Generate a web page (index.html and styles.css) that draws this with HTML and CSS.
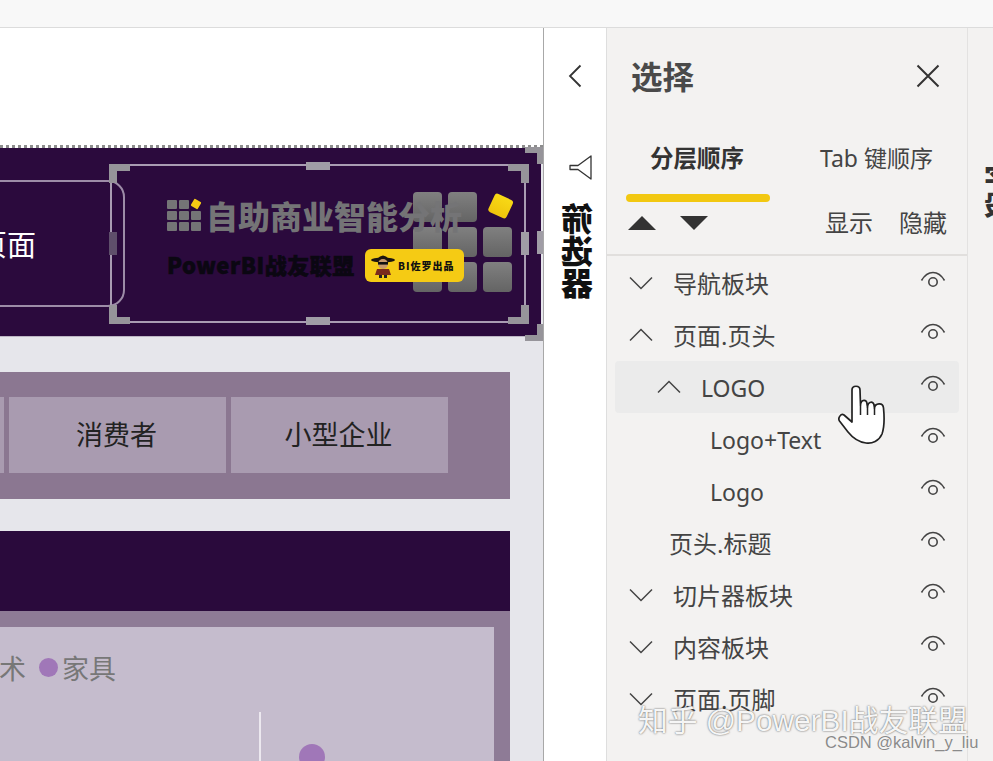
FILE: index.html
```html
<!DOCTYPE html>
<html lang="zh">
<head>
<meta charset="utf-8">
<title>选择</title>
<link rel="stylesheet" href="styles.css">
</head>
<body>
<div class="topbar"></div>
<div class="main">
  <section class="canvas">
    <div class="blank"></div>
    <div class="dots"></div>
    <div class="header-band">
      <div class="pill"><span class="pill-text">页面</span></div>
      <div class="big-grid"><i></i><i></i><b></b><i></i><i></i><i></i><i></i><i></i><i></i></div>
      <div class="logo">
        <div class="logo-title">
          <div class="mini-grid"><i></i><i></i><i></i><i></i><i></i><i></i><i></i><i></i><i></i></div>
          <span class="mini-diamond"></span>
          <span class="logo-cn">自助商业智能分析</span>
        </div>
        <div class="logo-sub">PowerBI战友联盟</div>
      </div>
      <div class="badge">
        <svg class="zorro" viewBox="0 0 26 24" width="26" height="24"><ellipse cx="13" cy="6" rx="12" ry="2.6" fill="#1b1410"/><path d="M7 5 Q13 -2 19 5Z" fill="#1b1410"/><circle cx="13" cy="10" r="5" fill="#c99a6a"/><rect x="8" y="8" width="10" height="2.6" fill="#111"/><path d="M7 15h12l2 6H5z" fill="#7a2a1c"/><path d="M9 21h3v3H9zM14 21h3v3h-3z" fill="#222"/></svg>
        <span class="badge-text">BI佐罗出品</span>
      </div>
      <div class="sel-frame inner">
        <span class="h tl"></span><span class="h tr"></span><span class="h bl"></span><span class="h br"></span>
        <span class="m top"></span><span class="m bottom"></span><span class="m left"></span><span class="m right"></span>
      </div>
      <span class="outer tr2"></span><span class="outer br2"></span><span class="outer-mid"></span>
    </div>
    <div class="tabs-band">
      <div class="slicer-btn"></div>
      <div class="slicer-btn">消费者</div>
      <div class="slicer-btn">小型企业</div>
    </div>
    <div class="chart-head"></div>
    <div class="chart-wrap">
      <div class="chart">
        <div class="legend"><span>术</span><i class="legend-dot"></i><span>家具</span></div>
        <div class="axis-line"></div>
        <div class="point"></div>
      </div>
    </div>
  </section>

  <aside class="filters">
    <svg class="back" viewBox="0 0 14 24" width="14" height="24"><path d="M12.5 1.5 2 12l10.500 10.500" fill="none" stroke="#333" stroke-width="1.800"/></svg>
    <svg class="funnel" viewBox="0 0 23 25" width="23" height="25"><path d="M22 1 V24 L9 14.500 H1 V10.500 H9 Z" fill="none" stroke="#333" stroke-width="1.300" stroke-linejoin="round"/></svg>
    <div class="filters-label">筛选器</div>
  </aside>

  <aside class="panel">
    <header class="panel-head">
      <h1>选择</h1>
      <svg viewBox="0 0 24 24" width="24" height="24"><path d="M1.500 1.500l21 21M22.500 1.500l-21 21" stroke="#333" stroke-width="2" fill="none"/></svg>
    </header>
    <nav class="tabs">
      <span class="tab active">分层顺序</span>
      <span class="tab">Tab 键顺序</span>
      <span class="tab-line"></span>
    </nav>
    <div class="toolbar">
      <span class="tri up"></span>
      <span class="tri down"></span>
      <span class="tool first">显示</span>
      <span class="tool">隐藏</span>
    </div>
    <ul class="layers">
      <li class="row l0"><svg class="chev" viewBox="0 0 24 14" width="24" height="14"><path d="M1 1.500 12 12.500 23 1.500"/></svg><span>导航板块</span><svg class="eye" viewBox="0 0 26 18" width="26" height="18"><path d="M1.500 9.500C5 3.500 9 1.500 13 1.500s8 2 11.500 8"/><circle cx="13" cy="11" r="4.200"/></svg></li>
      <li class="row l0"><svg class="chev" viewBox="0 0 24 14" width="24" height="14"><path d="M1 12.500 12 1.500 23 12.500"/></svg><span>页面.页头</span><svg class="eye" viewBox="0 0 26 18" width="26" height="18"><path d="M1.500 9.500C5 3.500 9 1.500 13 1.500s8 2 11.500 8"/><circle cx="13" cy="11" r="4.200"/></svg></li>
      <li class="row l1 hover"><svg class="chev" viewBox="0 0 24 14" width="24" height="14"><path d="M1 12.500 12 1.500 23 12.500"/></svg><span class="latin">LOGO</span><svg class="eye" viewBox="0 0 26 18" width="26" height="18"><path d="M1.500 9.500C5 3.500 9 1.500 13 1.500s8 2 11.500 8"/><circle cx="13" cy="11" r="4.200"/></svg></li>
      <li class="row l2"><span class="latin">Logo+Text</span><svg class="eye" viewBox="0 0 26 18" width="26" height="18"><path d="M1.500 9.500C5 3.500 9 1.500 13 1.500s8 2 11.500 8"/><circle cx="13" cy="11" r="4.200"/></svg></li>
      <li class="row l2"><span class="latin">Logo</span><svg class="eye" viewBox="0 0 26 18" width="26" height="18"><path d="M1.500 9.500C5 3.500 9 1.500 13 1.500s8 2 11.500 8"/><circle cx="13" cy="11" r="4.200"/></svg></li>
      <li class="row lp"><span>页头.标题</span><svg class="eye" viewBox="0 0 26 18" width="26" height="18"><path d="M1.500 9.500C5 3.500 9 1.500 13 1.500s8 2 11.500 8"/><circle cx="13" cy="11" r="4.200"/></svg></li>
      <li class="row l0"><svg class="chev" viewBox="0 0 24 14" width="24" height="14"><path d="M1 1.500 12 12.500 23 1.500"/></svg><span>切片器板块</span><svg class="eye" viewBox="0 0 26 18" width="26" height="18"><path d="M1.500 9.500C5 3.500 9 1.500 13 1.500s8 2 11.500 8"/><circle cx="13" cy="11" r="4.200"/></svg></li>
      <li class="row l0"><svg class="chev" viewBox="0 0 24 14" width="24" height="14"><path d="M1 1.500 12 12.500 23 1.500"/></svg><span>内容板块</span><svg class="eye" viewBox="0 0 26 18" width="26" height="18"><path d="M1.500 9.500C5 3.500 9 1.500 13 1.500s8 2 11.500 8"/><circle cx="13" cy="11" r="4.200"/></svg></li>
      <li class="row l0"><svg class="chev" viewBox="0 0 24 14" width="24" height="14"><path d="M1 1.500 12 12.500 23 1.500"/></svg><span>页面.页脚</span><svg class="eye" viewBox="0 0 26 18" width="26" height="18"><path d="M1.500 9.500C5 3.500 9 1.500 13 1.500s8 2 11.500 8"/><circle cx="13" cy="11" r="4.200"/></svg></li>
    </ul>
    <svg class="cursor" viewBox="0 0 48 60" width="48" height="60"><path d="M14 5C14 0 22 0 22 5L22.500 20C23 14 29 14 29 19L29.500 22C30 16 35.500 16 36 20L36.500 23C37 18 45 17 45.500 23C46.500 33 46.500 42 44 49C41 56 34 59 28 58C20 57 14 52 10 47L1.500 36C-.5 33 3 28 6 30L14 37Z" fill="#fff" stroke="#222" stroke-width="1.700" stroke-linejoin="round"/><path d="M22.500 20V30M29.500 22V30M36.500 23V30" stroke="#222" stroke-width="1.500" fill="none"/></svg>
  </aside>

  <aside class="right-strip"><span>字段</span></aside>
</div>
<div class="wm-zhihu">知乎 @PowerBI战友联盟</div>
<div class="wm-csdn">CSDN @kalvin_y_liu</div>
</body>
</html>
```

FILE: styles.css
```css
* { box-sizing: border-box; }
html, body { margin: 0; padding: 0; height: 761px; overflow: hidden; background: #fff; }
body { position: relative; font-family: "Noto Sans", "Noto Sans CJK SC", sans-serif; color: #444; }
ul { list-style: none; margin: 0; padding: 0; }
h1 { margin: 0; }

.topbar { height: 28px; background: #f8f8f8; border-bottom: 1px solid #dcdcdc; }
.main { display: flex; height: 733px; }

/* report canvas */
.canvas { position: relative; width: 544px; flex: none; background: #e6e6eb; border-right: 1px solid #a8a8a8; overflow: hidden; }
.blank { height: 116px; background: #fff; }
.dots { height: 4px; background: #fff; border-bottom: 3px dotted #8d8d8d; }
.header-band { position: relative; height: 189px; width: 541px; background: #2b0a3d; border-bottom: 1px solid #bdb6c4; }

.pill { position: absolute; left: -40px; top: 32px; width: 165px; height: 127px; border: 2px solid #9d8ca8; border-radius: 0 17px 17px 0; display: flex; justify-content: flex-end; align-items: center; padding-right: 87px; }
.pill-text { color: #fff; font-size: 29px; line-height: 1; white-space: nowrap; font-family: "Noto Sans CJK SC", sans-serif; }

.logo { position: absolute; left: 167px; top: 50px; }
.logo-title { display: flex; align-items: center; height: 33px; position: relative; }
.mini-grid { display: grid; grid-template-columns: repeat(3, 10px); grid-template-rows: repeat(3, 9px); gap: 2px; margin-right: 5px; margin-top: 1px; width: 34px; }
.mini-grid i { background: #747476; border-radius: 1px; }
.mini-grid i:nth-child(3) { background: transparent; }
.mini-diamond { position: absolute; left: 25px; top: 2px; width: 8px; height: 8px; background: #f5cb14; transform: rotate(30deg); border-radius: 1px; }
.logo-cn { font-size: 32px; line-height: 1; font-weight: 900; color: #747476; white-space: nowrap; font-family: "Noto Sans CJK SC", sans-serif; }
.logo-sub { margin-top: 21px; font-size: 22px; line-height: 24px; font-weight: 900; color: #0b0712; white-space: nowrap; font-family: "Noto Sans CJK SC", sans-serif; letter-spacing: .5px; -webkit-text-stroke: .6px #0b0712; }

.big-grid { position: absolute; left: 413px; top: 44px; display: grid; grid-template-columns: repeat(3, 29px); grid-template-rows: repeat(3, 30px); gap: 5px 6px; }
.big-grid i { background: linear-gradient(#808080, #646464); border-radius: 4px; }
.big-grid b { align-self: center; justify-self: center; width: 20px; height: 20px; background: linear-gradient(#f8d916, #efc40c); border-radius: 3px; transform: rotate(25deg) translate(2px, -2px); }

.badge { position: absolute; left: 365px; top: 101px; width: 99px; height: 33px; background: #f5cb14; border-radius: 6px; display: flex; align-items: center; padding-left: 5px; gap: 2px; }
.badge-text { font-size: 10px; font-weight: 900; color: #111; white-space: nowrap; letter-spacing: 1px; font-family: "Noto Sans CJK SC", sans-serif; }

.sel-frame { position: absolute; left: 110px; top: 16px; width: 416px; height: 159px; border: 2px solid #a99cb3; }
.h { position: absolute; width: 21px; height: 19px; border: 0 solid #96949a; }
.tl { left: -3px; top: -2px; border-width: 7px 0 0 8px; }
.tr { right: -5px; top: -2px; border-width: 7px 8px 0 0; }
.bl { left: -3px; bottom: -3px; border-width: 0 0 7px 8px; }
.br { right: -5px; bottom: -3px; border-width: 0 8px 7px 0; }
.m { position: absolute; background: #a09da6; }
.top { left: 194px; top: -4px; width: 24px; height: 8px; }
.bottom { left: 194px; bottom: -4px; width: 24px; height: 8px; }
.left { left: -3px; top: 66px; width: 8px; height: 23px; background: #5f4f6b; }
.right { right: -5px; top: 66px; width: 8px; height: 23px; }
.outer { position: absolute; width: 18px; height: 17px; border: 0 solid #96949a; right: -2px; }
.tr2 { top: -1px; border-width: 6px 6px 0 0; }
.br2 { bottom: -5px; border-width: 0 6px 6px 0; }
.outer-mid { position: absolute; right: -2px; top: 83px; width: 6px; height: 23px; background: #a09da6; }

.tabs-band { margin-top: 35px; width: 510px; height: 127px; background: #8b7791; display: flex; justify-content: flex-end; align-items: center; gap: 5px; padding: 0 62px 1px 0; }
.slicer-btn { width: 217px; height: 76px; flex: none; background: #a99bb0; display: flex; align-items: center; justify-content: center; padding: 0 2px 3px 0; color: #222; font-size: 27px; font-family: "Noto Sans CJK SC", sans-serif; }

.chart-head { margin-top: 32px; width: 510px; height: 80px; background: #2a0a3c; }
.chart-wrap { width: 510px; height: 200px; background: #8e7b96; padding: 16px 16px 0 0; }
.chart { position: relative; height: 200px; background: #c5bccd; }
.legend { display: flex; align-items: center; height: 42px; padding-top: 19px; box-sizing: content-box; margin-left: 1px; font-size: 27px; line-height: 1; color: #777; font-family: "Noto Sans CJK SC", sans-serif; }
.legend span:first-child { margin-left: -2px; }
.legend-dot { width: 19px; height: 19px; border-radius: 50%; background: #a077b8; margin: 0 4px 0 13px; }
.axis-line { position: absolute; left: 259px; top: 85px; width: 2px; height: 60px; background: #ece8ef; }
.point { position: absolute; left: 299px; top: 117px; width: 26px; height: 26px; border-radius: 50%; background: #a077b8; }

/* collapsed filter pane: the source video mirrors these labels */
.filters { width: 62px; flex: none; background: #fff; display: flex; flex-direction: column; align-items: flex-start; position: relative; }
.back { margin: 36px 0 0 24px; }
.funnel { margin: 67px 0 0 25px; }
.filters-label { margin: 23px 0 0 17px; writing-mode: vertical-rl; text-orientation: upright; font-size: 32px; line-height: 32px; font-weight: 900; color: #111; transform: scaleX(-1); font-family: "Noto Sans CJK SC", sans-serif; }

/* selection pane */
.panel { position: relative; width: 362px; flex: none; background: #f3f2f1; border-left: 1px solid #dedede; border-right: 1px solid #e3e2e1; display: flex; flex-direction: column; }
.panel-head { height: 100px; display: flex; justify-content: space-between; align-items: center; padding: 0 27px 0 24px; }
.panel-head h1 { font-size: 31.500px; line-height: 1; font-weight: 700; color: #4a4a4a; margin-top: -4px; font-family: "Noto Sans CJK SC", sans-serif; }
.panel-head svg { margin-top: -4px; }
.tabs { position: relative; height: 74px; display: flex; align-items: flex-start; padding: 16px 0 0 43px; font-size: 23.500px; line-height: 28px; }
.tab { white-space: nowrap; color: #444; }
.tab:nth-child(2) { margin-left: 76px; font-size: 23px; }
.tab.active { font-weight: 700; color: #333; }
.tab-line { position: absolute; left: 19px; bottom: 0; width: 144px; height: 8px; background: #f2c811; border-radius: 4px; }
.toolbar { height: 54px; display: flex; align-items: center; padding: 0 20px 10px 21px; border-bottom: 2px solid #e1dfdd; }
.tri { width: 0; height: 0; border-left: 14px solid transparent; border-right: 14px solid transparent; }
.up { border-bottom: 14px solid #333; }
.down { margin-left: 24px; border-top: 14px solid #333; }
.tool { font-size: 24px; line-height: 28px; color: #444; margin-left: 26px; }
.tool.first { margin-left: auto; }

.layers { padding-top: 1px; }
.row { display: flex; align-items: center; height: 52px; margin: 0 8px; padding-right: 13px; font-size: 24px; color: #444; white-space: nowrap; border-radius: 4px; }
.row span { flex: 1; margin-top: -2px; }
.row .latin { font-size: 23px; margin-top: 1px; }
.l0 { padding-left: 14px; }
.l1 { padding-left: 42px; }
.l2 { padding-left: 95px; }
.lp { padding-left: 54px; }
.hover { background: #ebebeb; }
.chev { margin-right: 20px; flex: none; fill: none; stroke: #444; stroke-width: 1.500; }
.eye { flex: none; margin-top: -6px; fill: none; stroke: #444; stroke-width: 1.600; }
.cursor { position: absolute; left: 231px; top: 357px; }

.right-strip { flex: 1; background: #f3f2f1; overflow: hidden; position: relative; }
.right-strip span { position: absolute; left: 16px; top: 136px; writing-mode: vertical-rl; text-orientation: upright; font-size: 27px; line-height: 27px; font-weight: 900; color: #333; transform: scaleX(-1); font-family: "Noto Sans CJK SC", sans-serif; }

/* video watermarks */
.wm-zhihu { position: absolute; left: 638px; top: 701px; font-size: 29.800px; line-height: 40px; white-space: nowrap; color: rgba(255,255,255,.95); text-shadow: 0 0 2px rgba(0,0,0,.7); font-family: "Liberation Sans", "Noto Sans CJK SC", sans-serif; }
.wm-csdn { position: absolute; left: 825px; top: 733px; font-size: 16.500px; line-height: 18px; white-space: nowrap; color: #8a8a8a; font-family: "Liberation Sans", sans-serif; text-shadow: 0 0 1px #fff; }
```
